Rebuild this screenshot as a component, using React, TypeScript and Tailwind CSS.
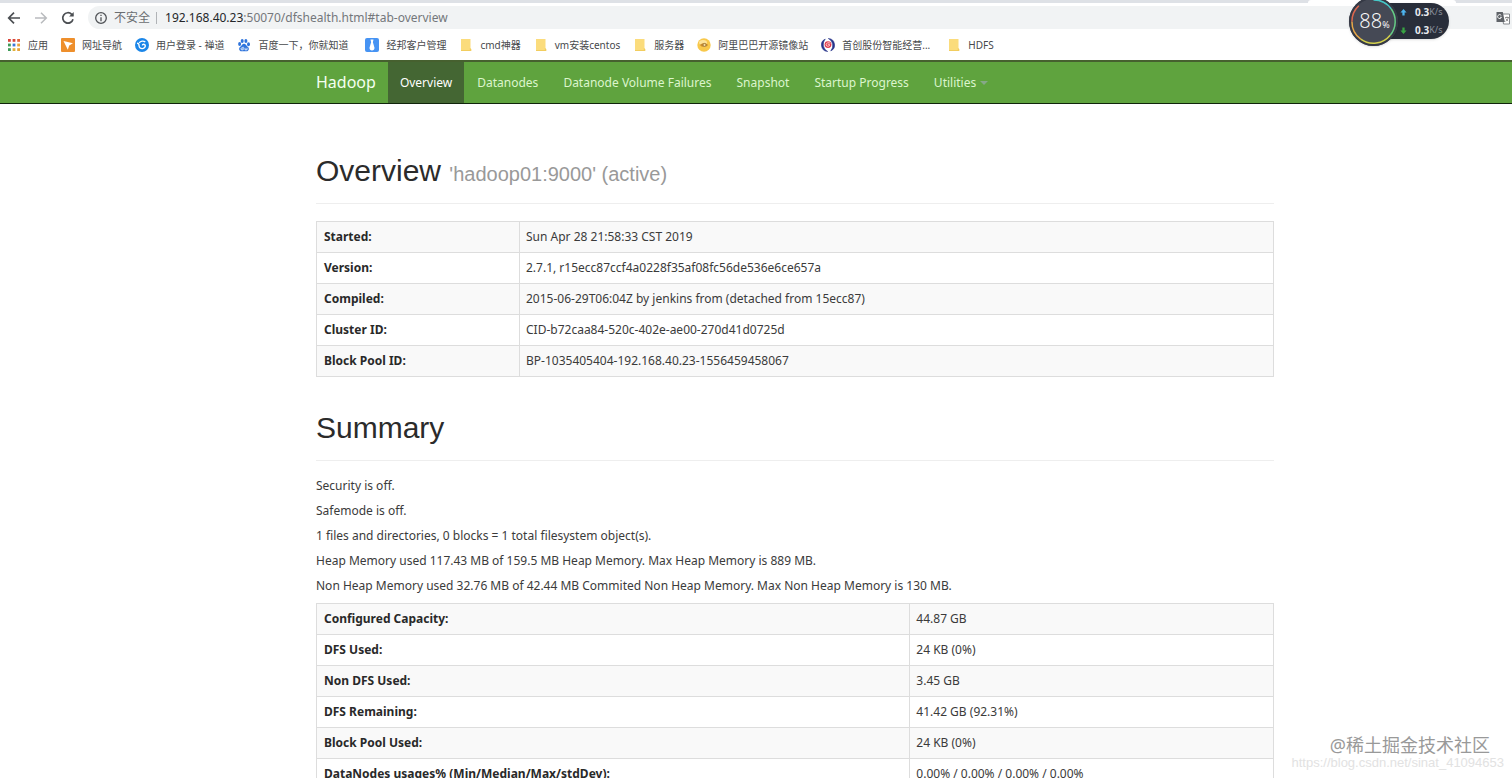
import type { ReactNode } from "react";

const bookmarks: { label: string; icon: ReactNode; wide?: boolean }[] = [
  { label: "应用", icon: <AppsIcon /> },
  { label: "网址导航", icon: <NavSiteIcon /> },
  { label: "用户登录 - 禅道", icon: <ZentaoIcon /> },
  { label: "百度一下，你就知道", icon: <PawIcon />, wide: true },
  { label: "经邦客户管理", icon: <TieIcon /> },
  { label: "cmd神器", icon: <FolderIcon /> },
  { label: "vm安装centos", icon: <FolderIcon /> },
  { label: "服务器", icon: <FolderIcon /> },
  { label: "阿里巴巴开源镜像站", icon: <MirrorIcon /> },
  { label: "首创股份智能经营...", icon: <SwirlIcon />, wide: true },
  { label: "HDFS", icon: <FolderIcon /> },
];

const navItems = ["Overview", "Datanodes", "Datanode Volume Failures", "Snapshot", "Startup Progress"];

const overviewRows: [string, string][] = [
  ["Started:", "Sun Apr 28 21:58:33 CST 2019"],
  ["Version:", "2.7.1, r15ecc87ccf4a0228f35af08fc56de536e6ce657a"],
  ["Compiled:", "2015-06-29T06:04Z by jenkins from (detached from 15ecc87)"],
  ["Cluster ID:", "CID-b72caa84-520c-402e-ae00-270d41d0725d"],
  ["Block Pool ID:", "BP-1035405404-192.168.40.23-1556459458067"],
];

const summaryLines = [
  "Security is off.",
  "Safemode is off.",
  "1 files and directories, 0 blocks = 1 total filesystem object(s).",
  "Heap Memory used 117.43 MB of 159.5 MB Heap Memory. Max Heap Memory is 889 MB.",
  "Non Heap Memory used 32.76 MB of 42.44 MB Commited Non Heap Memory. Max Non Heap Memory is 130 MB.",
];

const summaryRows: [string, string][] = [
  ["Configured Capacity:", "44.87 GB"],
  ["DFS Used:", "24 KB (0%)"],
  ["Non DFS Used:", "3.45 GB"],
  ["DFS Remaining:", "41.42 GB (92.31%)"],
  ["Block Pool Used:", "24 KB (0%)"],
  ["DataNodes usages% (Min/Median/Max/stdDev):", "0.00% / 0.00% / 0.00% / 0.00%"],
];

function AppsIcon() {
  const colors = ["#d9453a", "#d9453a", "#e0603a", "#3f9b57", "#3c78d8", "#e8a33a", "#3f9b57", "#e0b03a", "#e8a33a"];
  return (
    <svg viewBox="0 0 14 14" className="size-3.5">
      {colors.map((c, i) => (
        <rect key={i} x={1 + (i % 3) * 4.6} y={1 + Math.floor(i / 3) * 4.6} width="2.8" height="2.8" fill={c} />
      ))}
    </svg>
  );
}

function NavSiteIcon() {
  return (
    <svg viewBox="0 0 14 14" className="size-3.5">
      <rect width="14" height="14" rx="1" fill="#ee8f2c" />
      <path d="M2.5 3 12 5.2 8.2 7.4 6.8 11.8Z" fill="#fff" />
    </svg>
  );
}

function ZentaoIcon() {
  return (
    <svg viewBox="0 0 14 14" className="size-3.5" fill="none">
      <circle cx="7" cy="7" r="7" fill="#1b86e8" />
      <path d="M2 5.200C3.500 5.200 4 5.800 4 7.500 4.200 9.800 5.800 10.800 7.500 10.600 9.500 10.300 10.500 8.800 10.200 7.300 9.800 5.800 7.500 5.800 7.300 7.300" stroke="#fff" strokeWidth="1.400" />
      <path d="M4.200 4.800C5.500 2.800 8.500 2.500 10.300 4" stroke="#fff" strokeWidth="1.300" />
    </svg>
  );
}

function PawIcon() {
  return (
    <svg viewBox="0 0 14 14" className="size-3.5" fill="#2f74dc">
      <ellipse cx="2.600" cy="6" rx="1.500" ry="2" />
      <ellipse cx="5.200" cy="3" rx="1.500" ry="2.100" />
      <ellipse cx="8.900" cy="3" rx="1.500" ry="2.100" />
      <ellipse cx="11.500" cy="6.200" rx="1.500" ry="2" />
      <path d="M7 5.800C8.600 5.800 9.300 7.700 11 9 12.600 10.500 11.800 13.300 9.500 13.300 8 13.300 6 13.300 4.500 13.300 2.200 13.300 1.400 10.500 3 9 4.700 7.700 5.400 5.800 7 5.800Z" />
      <path d="M6.200 8.800v3H4.900a.9.9 0 0 1 0-1.900H6M8 9.800v2h2v-2" fill="none" stroke="#fff" strokeWidth=".8" />
    </svg>
  );
}

function TieIcon() {
  return (
    <svg viewBox="0 0 14 14" className="size-3.5">
      <rect width="14" height="14" rx="2" fill="#4693f3" />
      <path d="M5.500 1.500h3L7.900 4.200 9.500 9.800C9.500 11.500 8.500 12.500 7 12.500S4.500 11.500 4.500 9.800L6.100 4.200Z" fill="#fff" />
    </svg>
  );
}

function FolderIcon() {
  return (
    <svg viewBox="0 0 14 14" className="size-3.5">
      <path d="M2 1h9.500v9.500l.7.500v2H2Z" fill="#fbdc7c" />
      <path d="M2 12h8.800v-2l1.400 1v2H2Z" fill="#f2cd5e" />
    </svg>
  );
}

function MirrorIcon() {
  return (
    <svg viewBox="0 0 14 14" className="size-3.5">
      <circle cx="7" cy="7" r="6.700" fill="#f8c84b" />
      <ellipse cx="6" cy="4.500" rx="4" ry="2.500" fill="#fde39a" />
      <path d="M3 7C4.500 4.500 9.500 4.500 11 7 9.500 9.500 4.500 9.500 3 7Z" fill="#c98d2f" />
      <circle cx="7.500" cy="6.900" r="1.500" fill="#f9e0a0" stroke="#8d6a34" strokeWidth=".7" />
    </svg>
  );
}

function SwirlIcon() {
  return (
    <svg viewBox="0 0 14 14" className="size-3.5" fill="none">
      <g transform="rotate(-25 7 7)">
        <path d="M7 .5A6.500 6.500 0 0 0 4 12.800 8 8 0 0 1 7 .5Z" fill="#27348b" stroke="#27348b" strokeWidth=".5" />
        <path d="M10 1.200A6.500 6.500 0 0 1 7 13.500 8 8 0 0 0 10 1.200Z" fill="#27348b" stroke="#27348b" strokeWidth=".5" />
      </g>
      <circle cx="7" cy="6.600" r="3.400" fill="#e23a4b" />
      <path d="M9.300 5.400C8.100 4.100 5.100 4.600 5.100 6.800 5.300 8.800 8.600 8.700 8.700 7 8.500 5.900 7 6 7 7" stroke="#fff" strokeWidth=".7" />
    </svg>
  );
}

function TranslateIcon() {
  return (
    <svg viewBox="0 0 14 14" className="size-3.5">
      <path d="M6 3h7.500v10H7.500Z" fill="#fff" stroke="#85888c" />
      <path d="M.5 1h6.300l2 10H.5Z" fill="#5f6368" />
      <path d="M5.300 4.500A2 2 0 1 0 5.500 6.300H4" fill="none" stroke="#fff" strokeWidth=".9" />
      <path d="M9 6.500h4M11 5.500v1M12.200 6.500C12 8.300 11 9.500 9.600 10.300M9.700 7.500 12 10.200" fill="none" stroke="#777" strokeWidth=".8" />
    </svg>
  );
}

function BrowserChrome() {
  return (
    <header className="shrink-0 bg-white">
      <div className="flex h-[3px] bg-[#dee1e6]">
        <div className="mr-14 ml-auto w-37 rounded-t bg-white" />
      </div>
      <div className="flex h-[29px] items-center pl-[7px]">
        <button aria-label="Back" className="mr-[13px] text-[#4b4e52]">
          <svg viewBox="0 0 14 14" className="size-3.5" fill="none" stroke="currentColor" strokeWidth="1.700">
            <path d="M13 7H2M7 1.700 1.700 7 7 12.300" />
          </svg>
        </button>
        <button aria-label="Forward" className="mr-[13px] text-[#b9bbbe]">
          <svg viewBox="0 0 14 14" className="size-3.5" fill="none" stroke="currentColor" strokeWidth="1.500">
            <path d="M1 7h11M7 1.700 12.300 7 7 12.300" />
          </svg>
        </button>
        <button aria-label="Reload" className="mr-[13px] text-[#4b4e52]">
          <svg viewBox="0 0 14 14" className="size-3.5" fill="none" stroke="currentColor" strokeWidth="1.700">
            <path d="M12 8.200A5.200 5.200 0 1 1 10.700 3.300L12 4.600" />
            <path d="M12.700 1v4.600H8.100Z" fill="currentColor" stroke="none" />
          </svg>
        </button>
        <div className="flex h-[23px] flex-1 items-center rounded-l-full bg-[#f1f3f4] pr-0.5 pl-1.5 text-xs">
          <svg viewBox="0 0 14 14" className="mr-1.5 size-3.5" fill="none" stroke="#505357" strokeWidth="1.300">
            <circle cx="7" cy="7" r="5.300" />
            <path d="M7 6.300v4M7 3.700v1.400" />
          </svg>
          <span className="border-r border-[#b0b3b6] pr-1.5 leading-3 text-[#6a6d71]">不安全</span>
          <a href="#tab-overview" className="ml-2 text-[#74777b]">
            <span className="text-[#242629]">192.168.40.23</span>:50070/dfshealth.html#tab-overview
          </a>
          <button aria-label="Translate" className="ml-auto">
            <TranslateIcon />
          </button>
        </div>
      </div>
      <nav aria-label="Bookmarks" className="flex h-7 items-center gap-[13px] pb-0.5 pl-[7px]">
        {bookmarks.map((b) => (
          <a key={b.label} href="#" className="flex items-center gap-[7px] text-[10px] leading-4 whitespace-nowrap text-[#47494c]">
            {b.icon}
            <span className={b.wide ? "pr-1" : ""}>{b.label}</span>
          </a>
        ))}
      </nav>
    </header>
  );
}

function SpeedRow({ up }: { up?: boolean }) {
  return (
    <div className="flex items-center leading-[18px]">
      <svg viewBox="0 0 8 8" className={up ? "mr-2 size-[7px] fill-[#4db4ee]" : "mr-2 size-[7px] rotate-180 fill-[#38a343]"}>
        <path d="M4 0 7.500 4H5.300V7.500H2.700V4H.5Z" />
      </svg>
      <span className="text-[10px] font-bold text-[#e8eaee]">0.3</span>
      <span className="text-[9px] text-[#8a909b]">K/s</span>
    </div>
  );
}

function SpeedWidget() {
  return (
    <aside aria-label="Network speed" className="absolute top-[3px] right-[63px] flex w-[100px] items-center">
      <div className="ml-6 flex h-9 flex-1 flex-col justify-center rounded-r-full bg-[#292e3a] pl-[27px] shadow">
        <SpeedRow up />
        <SpeedRow />
      </div>
      <div className="absolute left-0 flex size-[49px] items-center justify-center rounded-full bg-[#454955] pl-0.5 shadow">
        <svg viewBox="0 0 50 50" className="absolute inset-0" fill="none" strokeWidth="1.500">
          <circle cx="25" cy="25" r="24" stroke="#353945" strokeWidth="2" />
          <path d="M25 3A22 22 0 0 1 43 12" stroke="#46c8c8" />
          <path d="M43 12A22 22 0 0 1 42 39" stroke="#65ce86" />
          <path d="M42 39A22 22 0 0 1 12 43" stroke="#d3d04b" />
          <path d="M12 43A22 22 0 0 1 3 25" stroke="#e8a747" />
          <path d="M3 25A22 22 0 0 1 10 9" stroke="#df674d" />
        </svg>
        <span className="relative font-['Open_Sans',sans-serif] text-xl font-light text-white">
          88<span className="text-[9px] font-normal">%</span>
        </span>
      </div>
    </aside>
  );
}

function DataTable({ rows, label, split }: { rows: [string, string][]; label: string; split: string }) {
  return (
    <table aria-label={label} className="w-full table-fixed border-collapse border border-[#dddddd]">
      <tbody>
        {rows.map(([name, value]) => (
          <tr key={name} className="h-[31px] odd:bg-[#f9f9f9]">
            <th scope="row" className={`${split} border border-[#dddddd] px-[7px] text-left font-bold text-[#292929]`}>
              {name}
            </th>
            <td className="border border-[#dddddd] px-1.5">{value}</td>
          </tr>
        ))}
      </tbody>
    </table>
  );
}

export default function App() {
  return (
    <div className="relative flex h-screen flex-col overflow-hidden bg-white font-['Noto_Sans','Noto_Sans_CJK_SC',sans-serif] text-xs leading-[18px] text-[#3b3b3b]">
      <BrowserChrome />
      <SpeedWidget />
      <nav aria-label="Main" className="flex h-11 shrink-0 gap-px border-t-2 border-b border-t-[#46602f] border-b-[#10250b] bg-[#5fa33e] pl-[316px] text-[#dcf5cd]">
        <a href="#" className="flex items-center pr-[11px] pb-px text-base text-[#f4fff0]">
          Hadoop
        </a>
        {navItems.map((item, i) => (
          <a
            key={item}
            href="#"
            className={i === 0 ? "flex items-center bg-[#446633] px-3 text-white" : "flex items-center px-3"}
          >
            {item}
          </a>
        ))}
        <button className="flex items-center gap-1 px-3">
          Utilities
          <svg viewBox="0 0 8 4" className="h-1 w-2 fill-[#86a888]">
            <path d="M0 0h8L4 4Z" />
          </svg>
        </button>
      </nav>
      <main className="min-h-0 flex-1 overflow-hidden pr-[238px] pl-[316px]">
        <h1 className="mt-[49px] mb-[17px] border-b border-[#eeeeee] pb-3.5 font-['Liberation_Sans',sans-serif] text-[30px] leading-9 text-[#2b2b2b]">
          Overview <small className="text-xl text-[#999999]">'hadoop01:9000' (active)</small>
        </h1>
        <DataTable rows={overviewRows} label="Overview" split="w-[203px]" />
        <h1 className="mt-[33px] mb-4 border-b border-[#eeeeee] pb-3.5 font-['Liberation_Sans',sans-serif] text-[30px] leading-9 text-[#2b2b2b]">
          Summary
        </h1>
        <div className="mb-2 flex flex-col gap-[7px]">
          {summaryLines.map((line) => (
            <p key={line}>{line}</p>
          ))}
        </div>
        <DataTable rows={summaryRows} label="Summary" split="w-[62%]" />
      </main>
      <div className="absolute right-2 bottom-1.5 flex flex-col items-end">
        <span className="mr-3.5 text-lg leading-[18px] text-[#999999]">@稀土掘金技术社区</span>
        <span className="font-['Liberation_Sans',sans-serif] text-[13px] text-[#e2e2e2]">https://blog.csdn.net/sinat_41094653</span>
      </div>
    </div>
  );
}
